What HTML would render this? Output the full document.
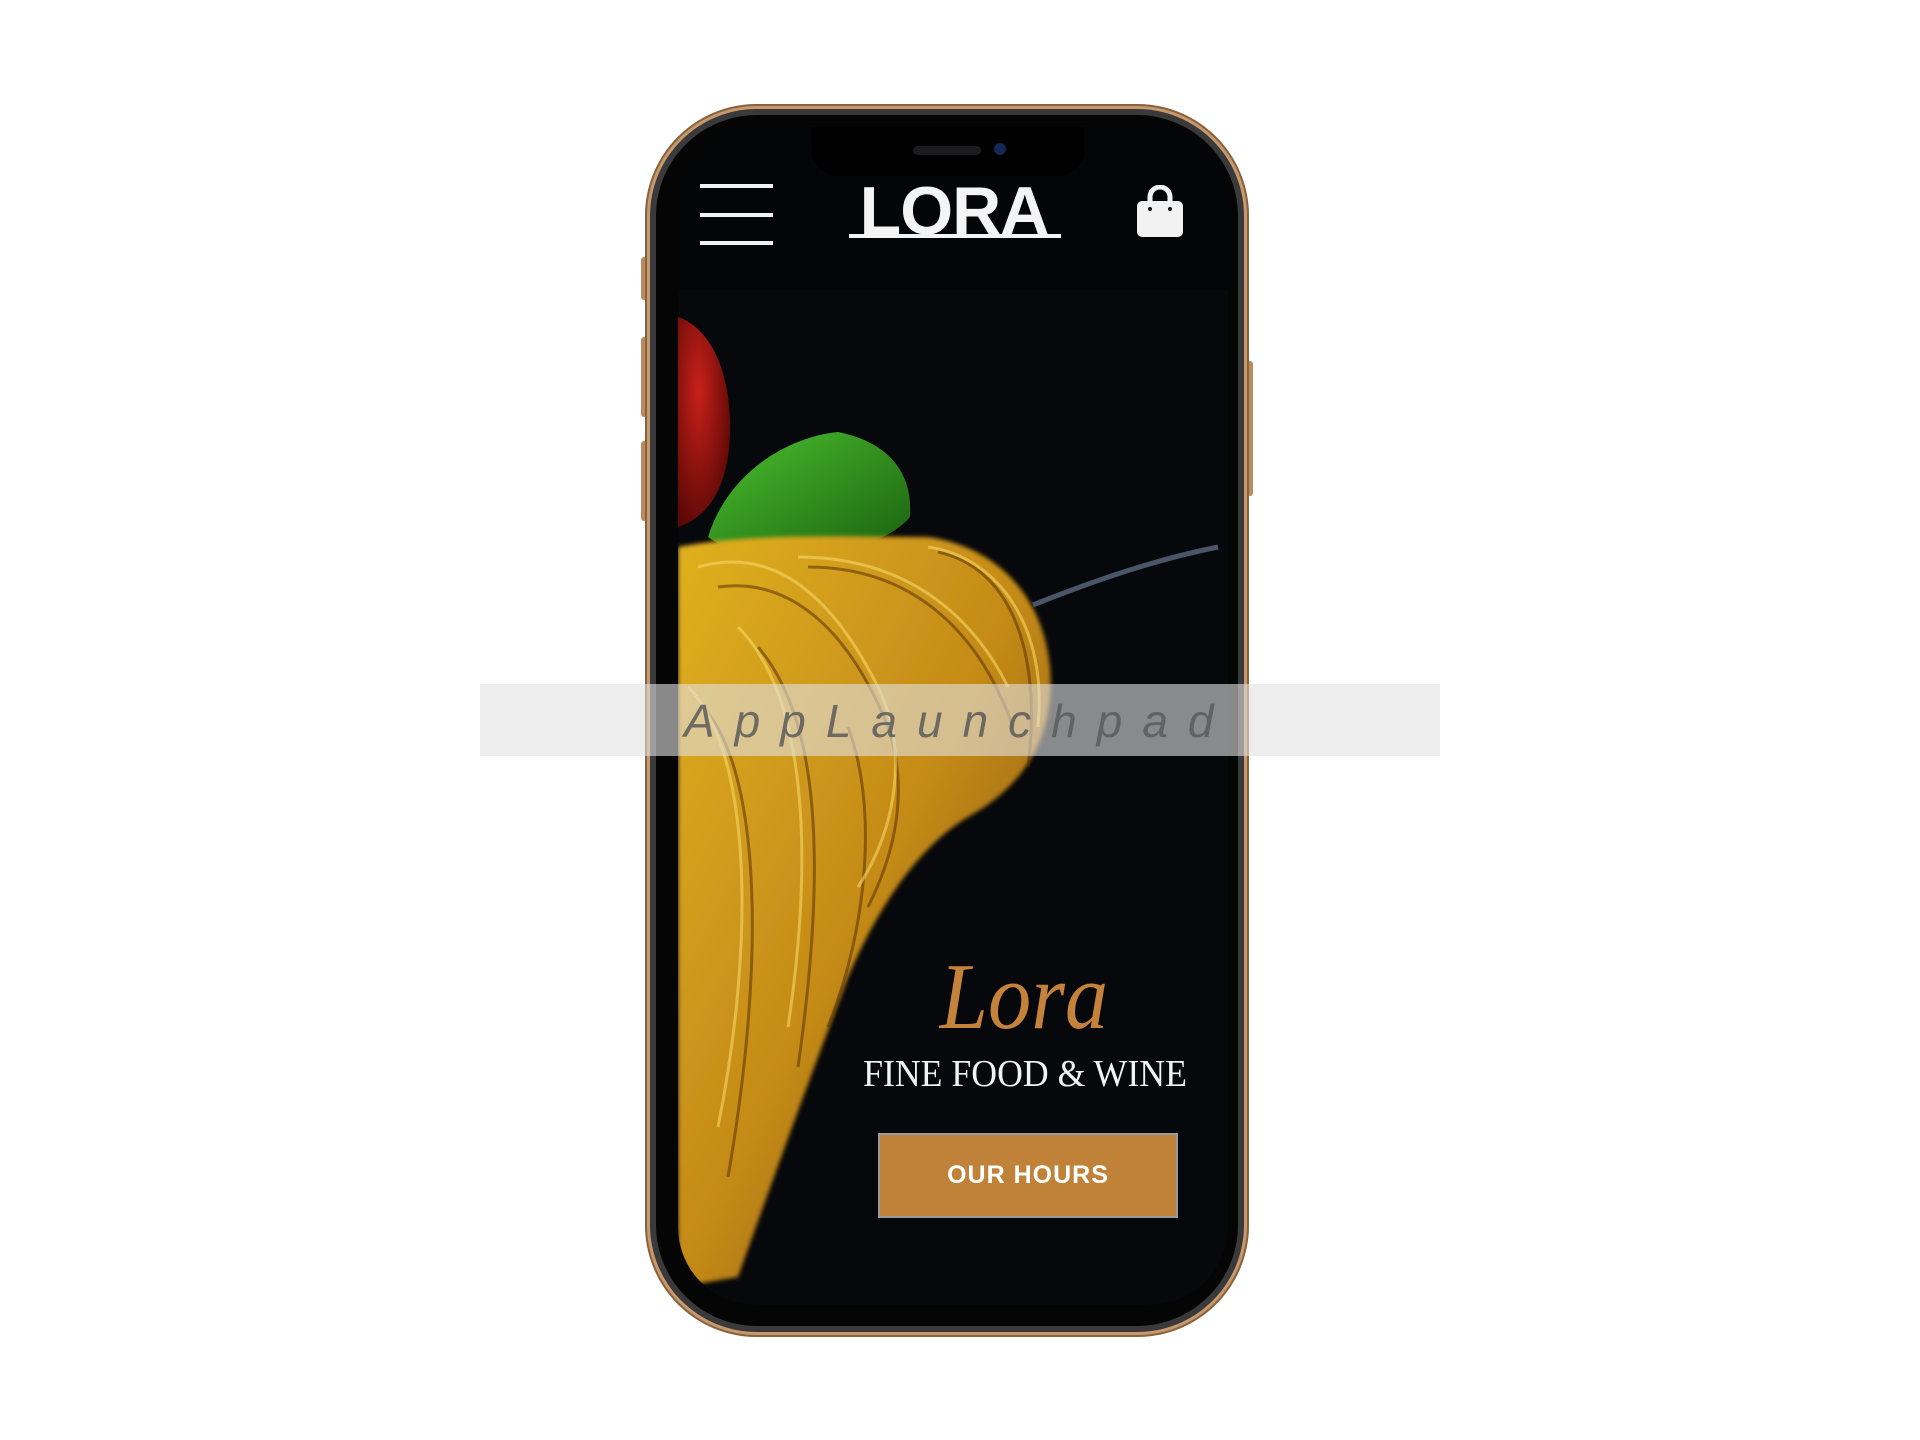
<!DOCTYPE html>
<html><head><meta charset="utf-8"><style>
html,body{margin:0;padding:0;width:1920px;height:1440px;background:#fff;overflow:hidden;position:relative;font-family:"Liberation Sans",sans-serif}
.abs{position:absolute}
</style></head><body>
<div class="abs" style="left:641px;top:257px;width:6px;height:43px;background:#b88b60;border-radius:3px"></div>
<div class="abs" style="left:641px;top:337px;width:6px;height:80px;background:#b88b60;border-radius:3px"></div>
<div class="abs" style="left:641px;top:441px;width:6px;height:80px;background:#b88b60;border-radius:3px"></div>
<div class="abs" style="left:1247px;top:361px;width:6px;height:135px;background:#b88b60;border-radius:3px"></div>
<div class="abs" style="left:645px;top:104px;width:604px;height:1233px;border-radius:112px;background:#c79a6e;box-shadow:inset 0 0 0 2px #8a6240"></div>
<div class="abs" style="left:650px;top:109px;width:594px;height:1223px;border-radius:107px;background:#3a3a3c"></div>
<div class="abs" style="left:656px;top:115px;width:582px;height:1211px;border-radius:101px;background:#050505"></div>
<div class="abs" style="left:678px;top:127px;width:550px;height:1178px;border-radius:78px;background:#050608;overflow:hidden">
  <svg width="550" height="1178" style="position:absolute;left:0;top:0">
    <defs>
      <radialGradient id="tom" cx="0.4" cy="0.35" r="0.7"><stop offset="0" stop-color="#c8201a"/><stop offset="1" stop-color="#5a0806"/></radialGradient>
      <linearGradient id="leaf" x1="0" y1="0" x2="1" y2="1"><stop offset="0" stop-color="#4cc02e"/><stop offset="1" stop-color="#1a6010"/></linearGradient>
      <linearGradient id="pas" x1="0" y1="0" x2="1" y2="1"><stop offset="0" stop-color="#e0b020"/><stop offset="0.5" stop-color="#c48a18"/><stop offset="1" stop-color="#6e420c"/></linearGradient>
      <filter id="bl"><feGaussianBlur stdDeviation="2"/></filter>
    </defs>
    <rect x="0" y="163" width="550" height="1015" fill="#07080c"/>
    <path d="M0 190 C30 200 52 240 52 300 C52 360 30 390 0 400 Z" fill="url(#tom)"/>
    <path d="M30 410 C50 345 110 310 160 305 C210 315 235 345 232 390 C210 415 170 425 120 428 C80 430 50 425 30 410 Z" fill="url(#leaf)"/>
    <g filter="url(#bl)">
    <path d="M0 420 C80 405 170 410 250 410 C320 420 365 470 372 540 C378 610 345 660 290 690 C240 720 200 780 170 850 C140 930 110 1010 60 1150 L0 1160 Z" fill="url(#pas)"/>
    </g>
    <g stroke="#5a3206" stroke-width="3" fill="none" opacity="0.55">
      <path d="M40 460 C110 450 170 500 210 600 C230 660 220 720 190 780"/>
      <path d="M130 440 C230 440 300 500 335 600"/>
      <path d="M260 425 C330 440 365 520 350 640"/>
      <path d="M80 520 C140 590 150 730 120 940"/>
      <path d="M25 580 C80 640 90 820 50 1050"/>
      <path d="M170 600 C200 680 190 800 150 900"/>
    </g>
    <g stroke="#f6d866" stroke-width="3" fill="none" opacity="0.6">
      <path d="M20 440 C90 420 150 460 200 560 C230 620 220 700 180 760"/>
      <path d="M120 430 C220 430 290 480 330 560"/>
      <path d="M250 420 C320 430 370 500 360 600"/>
      <path d="M60 500 C120 560 140 700 110 900"/>
      <path d="M10 560 C70 620 80 800 40 1000"/>
    </g>
    <path d="M355 478 C420 452 480 432 540 420" stroke="#4a5568" stroke-width="5" fill="none"/>
  </svg>
  <div class="abs" style="left:0;top:0;width:550px;height:163px;background:#040507"></div>
  <div class="abs" style="left:22px;top:57px;width:73px;height:4px;background:#f2f2f2"></div>
  <div class="abs" style="left:22px;top:86px;width:73px;height:4px;background:#f2f2f2"></div>
  <div class="abs" style="left:22px;top:114px;width:73px;height:4px;background:#f2f2f2"></div>
  <div class="abs" style="left:170px;top:50px;width:212px;text-align:center;color:#f4f4f4;font-size:68px;line-height:68px;font-weight:bold;letter-spacing:-1px">LORA</div>
  <div class="abs" style="left:171px;top:107px;width:212px;height:4px;background:#f4f4f4"></div>
  <svg class="abs" style="left:458px;top:58px" width="48" height="52"><path d="M14 18 V12 A10 10 0 0 1 34 12 V18" stroke="#f2f2f2" stroke-width="5" fill="none"/><rect x="1" y="16" width="46" height="36" rx="5" fill="#f2f2f2"/><circle cx="14" cy="24" r="2" fill="#111"/><circle cx="34" cy="24" r="2" fill="#111"/></svg>
  <div class="abs" style="left:133px;top:-10px;width:274px;height:59px;background:#000;border-radius:0 0 28px 28px"></div>
  <div class="abs" style="left:235px;top:19px;width:68px;height:9px;background:#1c1c1e;border-radius:5px"></div>
  <div class="abs" style="left:316px;top:16px;width:12px;height:12px;background:#122a55;border-radius:50%"></div>
  <div class="abs" style="left:196px;top:820px;width:300px;text-align:center;color:#c4823a;font-family:'Liberation Serif',serif;font-style:italic;font-size:94px;line-height:100px;transform:scaleX(0.92)">Lora</div>
  <div class="abs" style="left:160px;top:927px;width:374px;text-align:center;color:#f2f2f2;font-family:'Liberation Serif',serif;font-size:38px;line-height:40px;transform:scaleX(0.94)">FINE FOOD &amp; WINE</div>
  <div class="abs" style="left:200px;top:1006px;width:296px;height:81px;background:#c08238;border:2px solid #9a9a9a;color:#fff;font-weight:bold;font-size:25px;letter-spacing:1px;text-align:center;line-height:81px">OUR HOURS</div>
</div>
<div class="abs" style="left:480px;top:684px;width:960px;height:72px;background:rgba(225,225,225,0.6)"></div>
<div class="abs" style="left:684px;top:686px;color:rgba(90,90,90,0.85);font-style:italic;font-size:46px;line-height:70px;letter-spacing:20px;white-space:nowrap">AppLaunchpad</div>
</body></html>
